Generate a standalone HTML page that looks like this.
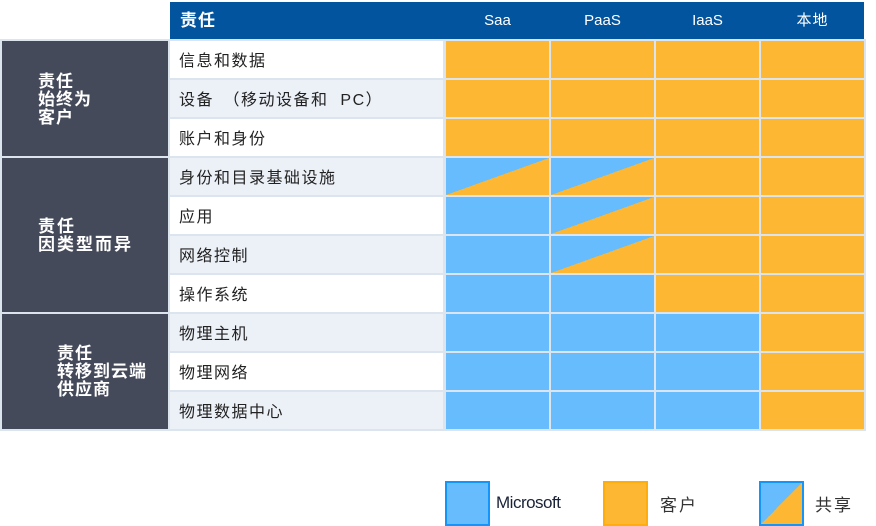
<!DOCTYPE html><html><head><meta charset="utf-8"><style>
body{margin:0;width:876px;height:526px;background:#fff;position:relative;overflow:hidden;font-family:"Liberation Sans","Noto Sans CJK SC",sans-serif}
div{position:absolute;box-sizing:border-box}
.g{background:#454a5a;color:#fff;font-weight:bold;font-size:17px;line-height:18px;letter-spacing:1px}
.l{font-size:16px;letter-spacing:1.5px;color:#222;padding-left:9px;line-height:41px;left:170px;width:273px;height:37px}
.h{color:#fff;font-size:15px;top:2px;height:37px;line-height:37px;text-align:center}
.c{width:103px;height:37px}
.o{background:#fdb733}.b{background:#66bcfd}
.s{background:linear-gradient(to top left,#fdb733 50%,#66bcfd 50%)}
</style></head><body>
<div style="left:170px;top:2px;width:694px;height:37px;background:#02549f"></div>
<div class="h" style="left:170px;padding-left:10px;font-weight:bold;font-size:17px;letter-spacing:1px">责任</div>
<div class="h" style="left:446px;width:103px">Saa</div>
<div class="h" style="left:551px;width:103px">PaaS</div>
<div class="h" style="left:656px;width:103px">IaaS</div>
<div class="h" style="left:761px;width:103px;letter-spacing:1px">本地</div>
<div style="left:0;top:39px;width:866px;height:392px;background:#dce4ee"></div>
<div class="g" style="left:2px;top:41px;width:166px;height:115px;padding:32px 0 0 36px">责任<br>始终为<br>客户</div>
<div class="g" style="left:2px;top:158px;width:166px;height:154px;padding:60px 0 0 36px;letter-spacing:2px">责任<br>因类型而异</div>
<div class="g" style="left:2px;top:314px;width:166px;height:115px;padding:31px 0 0 55px">责任<br>转移到云端<br>供应商</div>
<div class="l" style="top:41px;background:#fff">信息和数据</div>
<div class="l" style="top:80px;background:#ecf0f7">设备　（移动设备和&nbsp; PC）</div>
<div class="l" style="top:119px;background:#fff">账户和身份</div>
<div class="l" style="top:158px;background:#ecf0f7">身份和目录基础设施</div>
<div class="l" style="top:197px;background:#fff">应用</div>
<div class="l" style="top:236px;background:#ecf0f7">网络控制</div>
<div class="l" style="top:275px;background:#fff">操作系统</div>
<div class="l" style="top:314px;background:#ecf0f7">物理主机</div>
<div class="l" style="top:353px;background:#fff">物理网络</div>
<div class="l" style="top:392px;background:#ecf0f7">物理数据中心</div>

<div class="c o" style="left:446px;top:41px"></div><div class="c o" style="left:551px;top:41px"></div><div class="c o" style="left:656px;top:41px"></div><div class="c o" style="left:761px;top:41px"></div>
<div class="c o" style="left:446px;top:80px"></div><div class="c o" style="left:551px;top:80px"></div><div class="c o" style="left:656px;top:80px"></div><div class="c o" style="left:761px;top:80px"></div>
<div class="c o" style="left:446px;top:119px"></div><div class="c o" style="left:551px;top:119px"></div><div class="c o" style="left:656px;top:119px"></div><div class="c o" style="left:761px;top:119px"></div>
<div class="c s" style="left:446px;top:158px"></div><div class="c s" style="left:551px;top:158px"></div><div class="c o" style="left:656px;top:158px"></div><div class="c o" style="left:761px;top:158px"></div>
<div class="c b" style="left:446px;top:197px"></div><div class="c s" style="left:551px;top:197px"></div><div class="c o" style="left:656px;top:197px"></div><div class="c o" style="left:761px;top:197px"></div>
<div class="c b" style="left:446px;top:236px"></div><div class="c s" style="left:551px;top:236px"></div><div class="c o" style="left:656px;top:236px"></div><div class="c o" style="left:761px;top:236px"></div>
<div class="c b" style="left:446px;top:275px"></div><div class="c b" style="left:551px;top:275px"></div><div class="c o" style="left:656px;top:275px"></div><div class="c o" style="left:761px;top:275px"></div>
<div class="c b" style="left:446px;top:314px"></div><div class="c b" style="left:551px;top:314px"></div><div class="c b" style="left:656px;top:314px"></div><div class="c o" style="left:761px;top:314px"></div>
<div class="c b" style="left:446px;top:353px"></div><div class="c b" style="left:551px;top:353px"></div><div class="c b" style="left:656px;top:353px"></div><div class="c o" style="left:761px;top:353px"></div>
<div class="c b" style="left:446px;top:392px"></div><div class="c b" style="left:551px;top:392px"></div><div class="c b" style="left:656px;top:392px"></div><div class="c o" style="left:761px;top:392px"></div>

<div style="left:445px;top:481px;width:45px;height:45px;background:#66bcfd;border:2px solid #1296fd"></div>
<div style="left:496px;top:493px;font-size:17px;color:#1a2238;letter-spacing:-0.5px">Microsoft</div>
<div style="left:603px;top:481px;width:45px;height:45px;background:#fdb733;border:2px solid #ffad0c"></div>
<div style="left:660px;top:491px;font-size:17px;letter-spacing:2px;color:#333">客户</div>
<div style="left:759px;top:481px;width:45px;height:45px;background:linear-gradient(to top left,#fdb733 50%,#66bcfd 50%);border:2px solid #1296fd"></div>
<div style="left:815px;top:491px;font-size:17px;letter-spacing:2px;color:#333">共享</div>
</body></html>
